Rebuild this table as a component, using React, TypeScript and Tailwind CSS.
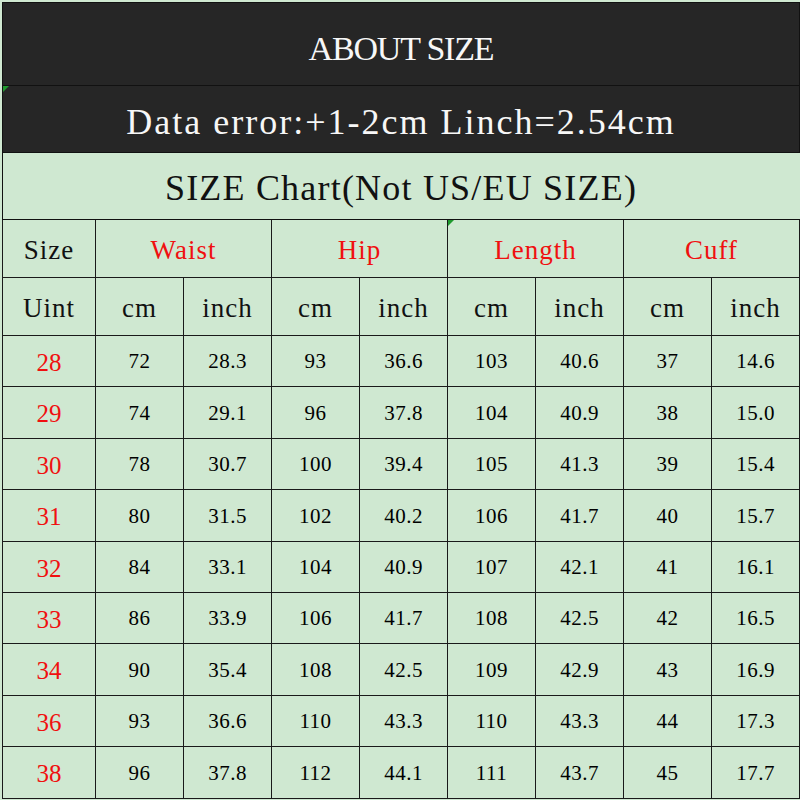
const rows = [
  ['28', '72', '28.3', '93', '36.6', '103', '40.6', '37', '14.6'],
  ['29', '74', '29.1', '96', '37.8', '104', '40.9', '38', '15.0'],
  ['30', '78', '30.7', '100', '39.4', '105', '41.3', '39', '15.4'],
  ['31', '80', '31.5', '102', '40.2', '106', '41.7', '40', '15.7'],
  ['32', '84', '33.1', '104', '40.9', '107', '42.1', '41', '16.1'],
  ['33', '86', '33.9', '106', '41.7', '108', '42.5', '42', '16.5'],
  ['34', '90', '35.4', '108', '42.5', '109', '42.9', '43', '16.9'],
  ['36', '93', '36.6', '110', '43.3', '110', '43.3', '44', '17.3'],
  ['38', '96', '37.8', '112', '44.1', '111', '43.7', '45', '17.7'],
];

const groups = ['Waist', 'Hip', 'Length', 'Cuff'];

const head = 'h-[58px] border border-[#1a1a1a] pt-[4px] text-center text-[27px] tracking-[1px]';

function Marker() {
  // little green comment triangle, as in the spreadsheet
  return (
    <span className="absolute left-0 top-0 h-0 w-0 border-l-[6px] border-b-[6px] border-l-[#1f9a2e] border-b-transparent" />
  );
}

export default function App() {
  return (
    <div className="h-[800px] w-[800px] overflow-hidden bg-[#cfe8d1] pl-[2px] pt-[2px]">
      <table className="w-[797px] table-fixed border-collapse font-['Liberation_Serif',serif]">
        <colgroup>
          <col className="w-[93px]" />
          {Array.from({ length: 8 }).map((_, i) => (
            <col key={i} className="w-[88px]" />
          ))}
        </colgroup>
        <tbody>
          <tr>
            <td colSpan={9} className="h-[83px] border border-[#111] bg-[#262626] pt-[8px] text-center text-[34px] tracking-[-1.2px] text-[#f7f7f7]">
              ABOUT SIZE
            </td>
          </tr>
          <tr>
            <td colSpan={9} className="relative h-[67px] border border-[#111] bg-[#262626] pt-[6px] text-center text-[36px] tracking-[2px] text-[#f7f7f7]">
              <Marker />
              Data error:+1-2cm Linch=2.54cm
            </td>
          </tr>
          <tr>
            <td colSpan={9} className="h-[67px] border border-[#111] border-r-[#cfe8d1] pt-[3px] text-center text-[36px] tracking-[1.2px] text-[#111]">
              SIZE Chart(Not US/EU SIZE)
            </td>
          </tr>
          <tr>
            <td className={`${head} text-[#111]`}>Size</td>
            {groups.map((g, i) => (
              <td key={g} colSpan={2} className={`${head} text-[#f01010] ${i === 2 ? 'relative' : ''}`}>
                {i === 2 && <Marker />}
                {g}
              </td>
            ))}
          </tr>
          <tr>
            <td className={`${head} text-[#111]`}>Uint</td>
            {groups.flatMap((g) => [
              <td key={g + 'cm'} className={`${head} text-[#111]`}>
                cm
              </td>,
              <td key={g + 'in'} className={`${head} text-[#111]`}>
                inch
              </td>,
            ])}
          </tr>
          {rows.map((r) => (
            <tr key={r[0]}>
              <td className="h-[51.4px] border border-[#1a1a1a] pt-[3px] text-center text-[25px] text-[#f01010]">
                {r[0]}
              </td>
              {r.slice(1).map((v, j) => (
                <td key={j} className="h-[51.4px] border border-[#1a1a1a] pt-[2px] text-center text-[21px] tracking-[0.5px] text-black">
                  {v}
                </td>
              ))}
            </tr>
          ))}
        </tbody>
      </table>
    </div>
  );
}
